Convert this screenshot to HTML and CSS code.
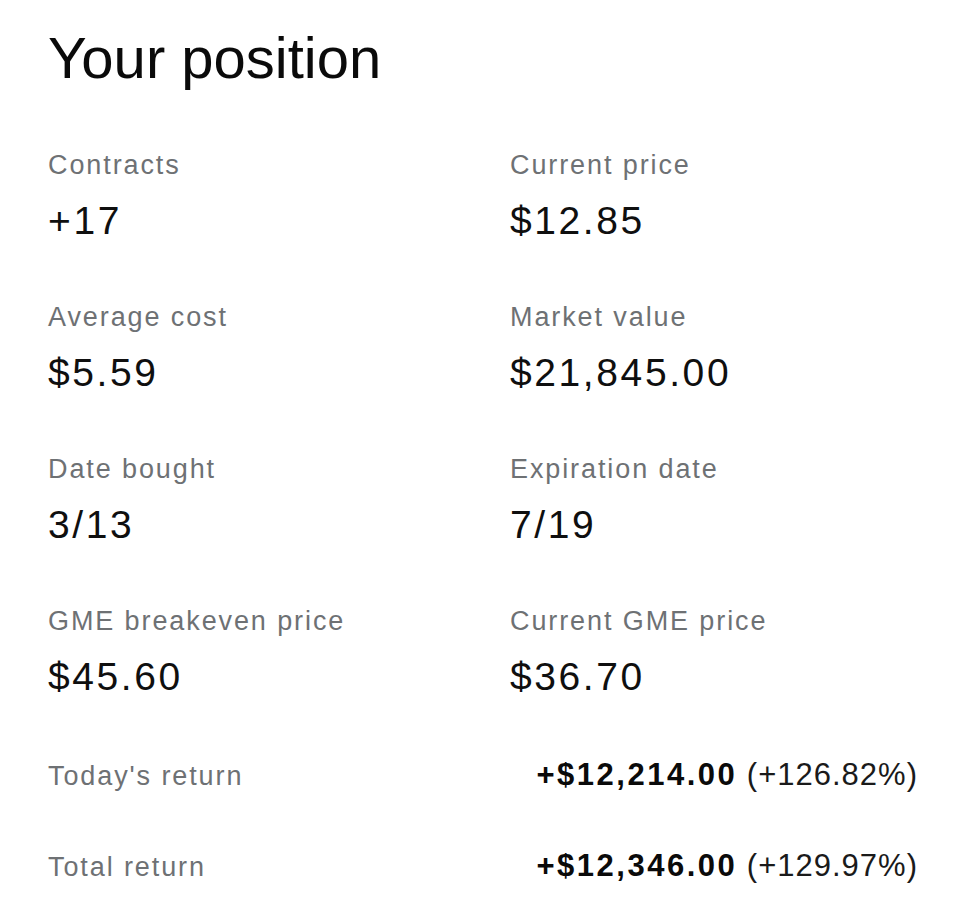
FILE: index.html
```html
<!DOCTYPE html>
<html lang="en">
<head>
<meta charset="utf-8">
<title>Your position</title>
<link rel="stylesheet" href="styles.css">
</head>
<body>
<main class="position">
  <h1 class="title">Your position</h1>
  <section class="stats">
    <div class="stat">
      <div class="label">Contracts</div>
      <div class="value">+17</div>
    </div>
    <div class="stat">
      <div class="label">Current price</div>
      <div class="value">$12.85</div>
    </div>
    <div class="stat">
      <div class="label">Average cost</div>
      <div class="value">$5.59</div>
    </div>
    <div class="stat">
      <div class="label">Market value</div>
      <div class="value">$21,845.00</div>
    </div>
    <div class="stat">
      <div class="label">Date bought</div>
      <div class="value">3/13</div>
    </div>
    <div class="stat">
      <div class="label">Expiration date</div>
      <div class="value">7/19</div>
    </div>
    <div class="stat">
      <div class="label">GME breakeven price</div>
      <div class="value">$45.60</div>
    </div>
    <div class="stat">
      <div class="label">Current GME price</div>
      <div class="value">$36.70</div>
    </div>
  </section>
  <section class="returns">
    <div class="return-row">
      <div class="label">Today's return</div>
      <div class="return-value"><strong>+$12,214.00</strong> (+126.82%)</div>
    </div>
    <div class="return-row">
      <div class="label">Total return</div>
      <div class="return-value"><strong>+$12,346.00</strong> (+129.97%)</div>
    </div>
  </section>
</main>
</body>
</html>
```
FILE: styles.css
```css
html, body {
  margin: 0;
  padding: 0;
  background: #ffffff;
}

body {
  font-family: "Liberation Sans", Arial, sans-serif;
  color: #111111;
}

.position {
  padding: 29px 55px 0 48px;
  display: flex;
  flex-direction: column;
}

.title {
  margin: 0;
  font-size: 58px;
  line-height: 57px;
  font-weight: 400;
  color: #0a0a0a;
}

.stats {
  margin-top: 63px;
  display: grid;
  grid-template-columns: 462px 1fr;
  row-gap: 58px;
}

.stat {
  display: flex;
  flex-direction: column;
  gap: 18px;
}

.label {
  font-size: 27px;
  line-height: 32px;
  color: #6e7174;
  letter-spacing: 1.9px;
}

.value {
  font-size: 39px;
  line-height: 44px;
  color: #0f0f0f;
  letter-spacing: 2.6px;
}

.returns {
  margin-top: 58px;
  display: flex;
  flex-direction: column;
  gap: 55px;
}

.return-row {
  display: flex;
  justify-content: space-between;
  align-items: baseline;
  height: 36px;
}

.return-value {
  font-size: 31px;
  line-height: 36px;
  color: #1a1a1a;
  letter-spacing: 1px;
}

.return-value strong {
  font-weight: 700;
  color: #0a0a0a;
  letter-spacing: 2.5px;
}
```
